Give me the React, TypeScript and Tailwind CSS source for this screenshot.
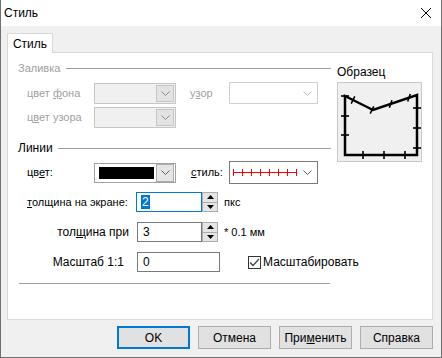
import React from 'react';

// Small helpers for the Win32-looking controls

function Chevron({ color = '#606060' }: { color?: string }) {
  return (
    <svg width="9" height="5" viewBox="0 0 9 5">
      <polyline points="0.5,0.5 4.5,4.5 8.5,0.5" fill="none" stroke={color} strokeWidth="1" />
    </svg>
  );
}

function Spin() {
  return (
    <div className="shrink-0 w-[16px] h-[20px] border border-[#adadad] bg-[#e5e5e5] flex flex-col">
      <div className="flex-1 flex items-center justify-center border-b border-[#adadad]">
        <svg width="7" height="4" viewBox="0 0 7 4">
          <polygon points="0,4 3.5,0 7,4" fill="#000" />
        </svg>
      </div>
      <div className="flex-1 flex items-center justify-center">
        <svg width="7" height="4" viewBox="0 0 7 4">
          <polygon points="0,0 3.5,4 7,0" fill="#000" />
        </svg>
      </div>
    </div>
  );
}

function DisabledCombo() {
  return (
    <div className="shrink-0 w-[82px] h-[21px] border border-[#c6c6c6] bg-[#f0f0f0] flex justify-end p-px">
      <div className="w-[18px] h-full border border-[#c6c6c6] bg-[#e3e3e3] flex items-center justify-center">
        <Chevron color="#8a8a8a" />
      </div>
    </div>
  );
}

function Sample() {
  // ticks perpendicular to each edge of the sample figure
  const ticks: [number, number, number, number][] = [
    [4, 14, 12, 14],
    [4, 34, 12, 34],
    [4, 53, 12, 53],
    [26, 69, 26, 77],
    [47, 69, 47, 77],
    [68, 69, 68, 77],
    [76, 26, 84, 26],
    [76, 46, 84, 46],
    [76, 66, 84, 66],
    [14.2, 21.6, 17.8, 14.4],
    [33.2, 31.6, 36.8, 24.4],
    [52.4, 25.8, 55, 18.2],
    [70.7, 19.5, 73.3, 11.9],
  ];
  return (
    <svg width="83" height="78" viewBox="1 1 83 78">
      <path d="M8,14 L36,28 L80,13 L80,73 L8,73 Z" fill="none" stroke="#000" strokeWidth="2.5" strokeLinejoin="miter" />
      {ticks.map(([x1, y1, x2, y2], i) => (
        <line key={i} x1={x1} y1={y1} x2={x2} y2={y2} stroke="#000" strokeWidth="1.6" />
      ))}
    </svg>
  );
}

function StyleLine() {
  const xs = [0, 9, 18, 27, 36, 45, 54, 63];
  return (
    <svg width="64" height="7" viewBox="0 0 64 7">
      <line x1="0" y1="3.5" x2="64" y2="3.5" stroke="#ff0000" strokeWidth="1" />
      {xs.map((x) => (
        <line key={x} x1={x + 0.5} y1="0" x2={x + 0.5} y2="7" stroke="#ff0000" strokeWidth="1" />
      ))}
    </svg>
  );
}

export default function App() {
  return (
    <div
      className="w-[442px] h-[358px] bg-[#f0f0f0] border-x border-b border-[#707070] flex flex-col text-[12px] text-black leading-none"
      style={{ fontFamily: '"Liberation Sans", Arial, sans-serif' }}
    >
      {/* Title bar */}
      <div className="h-[26px] bg-white flex items-center justify-between pl-[3px] pr-[10px]">
        <span className="text-[12px]">Стиль</span>
        <svg width="10" height="10" viewBox="0 0 10 10">
          <line x1="0" y1="0" x2="10" y2="10" stroke="#000" strokeWidth="1" />
          <line x1="10" y1="0" x2="0" y2="10" stroke="#000" strokeWidth="1" />
        </svg>
      </div>

      <div className="px-[6px] flex flex-col">
        {/* Tab */}
        <div className="mt-[7px] -mb-px relative z-10 w-[46px] h-[20px] bg-white border border-b-0 border-[#d9d9d9] flex items-center justify-center">
          Стиль
        </div>

        {/* Tab panel */}
        <div className="w-[426px] h-[268px] bg-white border border-[#d9d9d9] flex">
          <div className="w-[323px] shrink-0 flex flex-col whitespace-nowrap">
            {/* Заливка */}
            <div className="mt-[8px] h-[14px] flex items-center">
              <span className="ml-[10px] text-[#a0a0a0] text-[11px]">Заливка</span>
              <div className="flex-1 h-px bg-[#a0a0a0] ml-[6px]" />
            </div>
            <div className="mt-[7px] h-[22px] flex items-center">
              <span className="shrink-0 w-[86px] pl-[19px] text-[#a0a0a0] text-[11px]">
                цвет <u>ф</u>она
              </span>
              <DisabledCombo />
              <span className="shrink-0 w-[53px] pl-[14px] text-[#a0a0a0] text-[11px]">
                у<u>з</u>ор
              </span>
              <div className="shrink-0 w-[89px] h-[22px] border border-[#d0d0d0] bg-white flex items-center justify-end pr-[5px]">
                <Chevron color="#b8b8b8" />
              </div>
            </div>
            <div className="mt-[3px] h-[21px] flex items-center">
              <span className="shrink-0 w-[86px] pl-[19px] text-[#a0a0a0] text-[11px]">
                ц<u>в</u>ет узора
              </span>
              <DisabledCombo />
            </div>

            {/* Линии */}
            <div className="mt-[13px] h-[14px] flex items-center">
              <span className="ml-[10px]">Линии</span>
              <div className="flex-1 h-px bg-[#a0a0a0] ml-[5px]" />
            </div>
            <div className="mt-[6px] h-[23px] flex items-center">
              <span className="shrink-0 w-[86px] pl-[19px] text-[11px]">
                цв<u>е</u>т:
              </span>
              <div className="shrink-0 w-[82px] h-[20px] border border-[#a0a0a0] bg-white flex items-center p-[2px] gap-[2px]">
                <div className="flex-1 h-[12px] bg-black ml-[2px]" />
                <div className="w-[18px] h-[18px] -mr-[1px] border border-[#adadad] bg-[#e5e5e5] flex items-center justify-center">
                  <Chevron />
                </div>
              </div>
              <span className="shrink-0 w-[53px] pl-[15px] text-[11px]">
                <u>с</u>тиль:
              </span>
              <div className="shrink-0 w-[89px] h-[23px] border border-[#7a7a7a] bg-white flex items-center pl-[3px] pr-[5px] justify-between">
                <StyleLine />
                <Chevron />
              </div>
            </div>

            <div className="mt-[8px] h-[20px] flex items-center">
              <span className="shrink-0 w-[128px] pl-[19px] text-[11px]">
                <u>т</u>олщина на экране:
              </span>
              <div className="shrink-0 w-[66px] h-[20px] border border-[#0078d7] bg-white flex items-center pl-[4px]">
                <span className="bg-[#0078d7] text-white px-px h-[14px] flex items-center">2</span>
              </div>
              <Spin />
              <span className="ml-[6px] text-[11px]">пкс</span>
            </div>

            <div className="mt-[10px] h-[20px] flex items-center">
              <span className="shrink-0 w-[129px] pr-[8px] text-right">
                тол<u>щ</u>ина при
              </span>
              <div className="shrink-0 w-[65px] h-[20px] border border-[#7a7a7a] bg-white flex items-center pl-[5px]">3</div>
              <Spin />
              <span className="ml-[6px] text-[11px]">* 0.1 мм</span>
            </div>

            <div className="mt-[10px] h-[20px] flex items-center">
              <span className="shrink-0 w-[129px] pr-[13px] text-right">Масштаб 1:1</span>
              <div className="shrink-0 w-[83px] h-[20px] border border-[#7a7a7a] bg-white flex items-center pl-[5px]">0</div>
              <div className="shrink-0 ml-[28px] w-[13px] h-[13px] border border-[#333] bg-white flex items-center justify-center">
                <svg width="11" height="9" viewBox="0 0 11 9">
                  <polyline points="1,4.5 4,7.5 10,1" fill="none" stroke="#444" strokeWidth="1.3" />
                </svg>
              </div>
              <span className="ml-[2px]">Масштабировать</span>
            </div>

            <div className="mt-[11px] ml-[11px] w-[311px] h-px bg-[#a0a0a0]" />
          </div>

          {/* Образец */}
          <div className="pl-[6px] flex flex-col">
            <div className="mt-[12px] h-[14px] flex items-center">Образец</div>
            <div className="mt-[3px] w-[85px] h-[80px] border border-[#c8c8c8] bg-[#f0f0f0]">
              <Sample />
            </div>
          </div>
        </div>

        {/* Buttons */}
        <div className="mt-[6px] w-[426px] flex justify-end gap-[8px]">
          <button className="w-[73px] h-[23px] bg-[#e1e1e1] border-2 border-[#0078d7] flex items-center justify-center">
            OK
          </button>
          <button className="w-[73px] h-[23px] bg-[#e1e1e1] border border-[#adadad] flex items-center justify-center">
            Отмена
          </button>
          <button className="w-[73px] h-[23px] bg-[#e1e1e1] border border-[#adadad] flex items-center justify-center">
            При<u>м</u>енить
          </button>
          <button className="w-[73px] h-[23px] bg-[#e1e1e1] border border-[#adadad] flex items-center justify-center">
            Справка
          </button>
        </div>
      </div>
    </div>
  );
}
